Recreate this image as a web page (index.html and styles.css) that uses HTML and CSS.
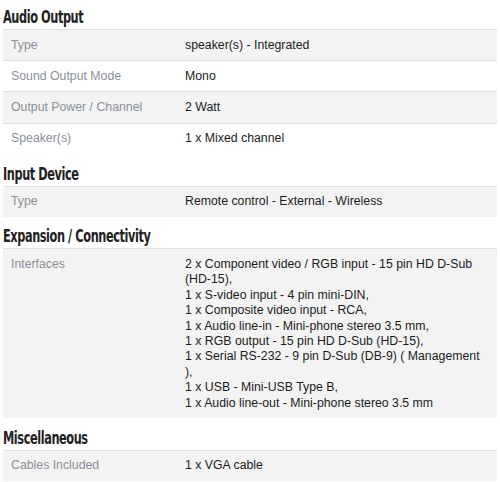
FILE: index.html
```html
<!DOCTYPE html>
<html>
<head>
<meta charset="utf-8">
<link rel="stylesheet" href="styles.css">
</head>
<body>
<section class="spec">
  <h2 class="spec-title">Audio Output</h2>
  <div class="spec-table">
    <div class="row"><div class="label">Type</div><div class="value">speaker(s) - Integrated</div></div>
    <div class="row"><div class="label">Sound Output Mode</div><div class="value">Mono</div></div>
    <div class="row"><div class="label">Output Power / Channel</div><div class="value">2 Watt</div></div>
    <div class="row"><div class="label">Speaker(s)</div><div class="value">1 x Mixed channel</div></div>
  </div>
</section>
<section class="spec">
  <h2 class="spec-title">Input Device</h2>
  <div class="spec-table">
    <div class="row"><div class="label">Type</div><div class="value">Remote control - External - Wireless</div></div>
  </div>
</section>
<section class="spec">
  <h2 class="spec-title">Expansion / Connectivity</h2>
  <div class="spec-table">
    <div class="row"><div class="label">Interfaces</div><div class="value">2 x Component video / RGB input - 15 pin HD D-Sub (HD-15),<br>1 x S-video input - 4 pin mini-DIN,<br>1 x Composite video input - RCA,<br>1 x Audio line-in - Mini-phone stereo 3.5 mm,<br>1 x RGB output - 15 pin HD D-Sub (HD-15),<br>1 x Serial RS-232 - 9 pin D-Sub (DB-9) ( Management ),<br>1 x USB - Mini-USB Type B,<br>1 x Audio line-out - Mini-phone stereo 3.5 mm</div></div>
  </div>
</section>
<section class="spec">
  <h2 class="spec-title">Miscellaneous</h2>
  <div class="spec-table">
    <div class="row"><div class="label">Cables Included</div><div class="value">1 x VGA cable</div></div>
  </div>
</section>
</body>
</html>
```

FILE: styles.css
```css
html, body {
  margin: 0;
  padding: 0;
  background: #ffffff;
}
body {
  padding: 0 3px;
  font-family: "Liberation Sans", Arial, sans-serif;
  font-size: 12.3px;
  color: #1c1c1c;
}
.spec-title {
  margin: 0;
  padding: 8.7px 0 1px;
  font-family: "DejaVu Sans Condensed", "DejaVu Sans", sans-serif;
  font-weight: bold;
  font-size: 18px;
  line-height: 22px;
  letter-spacing: -0.6px;
  color: #222222;
  transform: scaleX(0.7);
  transform-origin: left center;
}
.spec:first-child .spec-title {
  padding-top: 6px;
}
.spec-table {
  width: 494px;
}
.row {
  display: grid;
  grid-template-columns: 174px 1fr;
  border-top: 1px solid #e0e0e0;
}
.row:nth-child(odd) {
  background: #f3f3f3;
}
.label, .value {
  padding: 7.5px 12px 7.3px 8px;
  line-height: 15.4px;
}
.label {
  color: #8b9199;
}
.value {
  color: #1c1c1c;
}
```
